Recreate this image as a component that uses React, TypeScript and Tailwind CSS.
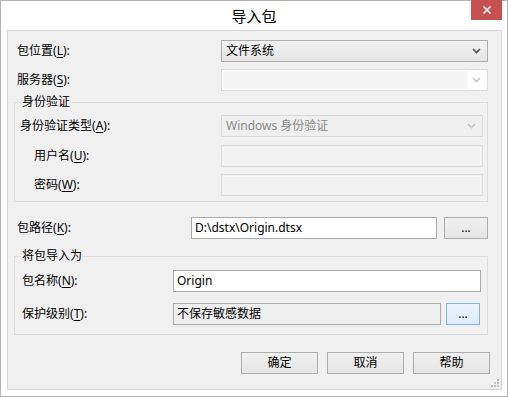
import React from "react";

const font = { fontFamily: '"Noto Sans", "Noto Sans CJK SC", sans-serif' };

function U({ c }: { c: string }) {
  return <span className="underline underline-offset-2">{c}</span>;
}

function Label({ text, k, className = "" }: { text: string; k: string; className?: string }) {
  return (
    <div className={"text-[12px] leading-[22px] text-black " + className}>
      {text}(<U c={k} />):
    </div>
  );
}

function Chevron({ color }: { color: string }) {
  return (
    <svg width="9" height="6" viewBox="0 0 9 6" className="shrink-0">
      <path d="M1 1 L4.5 4.5 L8 1" fill="none" stroke={color} strokeWidth="1.6" />
    </svg>
  );
}

function Btn({ children, className = "" }: { children: React.ReactNode; className?: string }) {
  return (
    <div
      className={
        "h-[22px] flex items-center justify-center text-[12px] text-black border border-[#acacac] bg-gradient-to-b from-[#f0f0f0] to-[#e5e5e5] " +
        className
      }
    >
      {children}
    </div>
  );
}

export default function App() {
  return (
    <div className="w-[508px] h-[397px] bg-white border border-[#b4b4b4] relative flex flex-col" style={font}>
      {/* title bar */}
      <div className="h-[29px] flex items-center justify-center text-[15px] text-black pt-[1px]">导入包</div>
      <div className="absolute top-[-1px] right-[5px] w-[31px] h-[20px] bg-[#c75050] flex items-center justify-center">
        <svg width="10" height="10" viewBox="0 0 10 10">
          <path d="M1.5 1.5 L8.5 8.5 M8.5 1.5 L1.5 8.5" stroke="white" strokeWidth="1.6" />
        </svg>
      </div>

      {/* client */}
      <div className="ml-[6px] w-[495px] h-[360px] border border-[#d6d6d6] bg-[#f0f0f0] flex flex-col relative">
        {/* 包位置 */}
        <div className="flex mt-[9px] pl-[9px]">
          <Label text="包位置" k="L" className="w-[204px]" />
          <div className="w-[267px] h-[22px] border border-[#acacac] bg-gradient-to-b from-[#f2f2f2] to-[#e5e5e5] flex items-center justify-between pl-[4px] pr-[6px]">
            <span className="text-[12px] text-black">文件系统</span>
            <Chevron color="#555555" />
          </div>
        </div>
        {/* 服务器 */}
        <div className="flex mt-[7px] pl-[9px]">
          <Label text="服务器" k="S" className="w-[204px]" />
          <div className="w-[267px] h-[22px] border border-[#dcdcdc] bg-white p-[1px] flex">
            <div className="flex-1 bg-[#f4f4f4]" />
            <div className="w-[19px] flex items-center justify-center">
              <Chevron color="#c8c8c8" />
            </div>
          </div>
        </div>

        {/* 身份验证 fieldset */}
        <div className="relative mt-[11px] ml-[6px] w-[474px] h-[100px] border border-[#dcdcdc] flex flex-col">
          <div className="absolute top-[-10px] left-[6px] px-[1px] bg-[#f0f0f0] text-[12px] leading-[18px] text-black">身份验证</div>
          <div className="flex mt-[12px] pl-[5px]">
            <Label text="身份验证类型" k="A" className="w-[201px]" />
            <div className="w-[262px] h-[22px] border border-[#d9d9d9] bg-[#efefef] flex items-center justify-between pl-[4px] pr-[6px]">
              <span className="text-[12px] text-[#8a8a8a]">Windows 身份验证</span>
              <Chevron color="#c4c4c4" />
            </div>
          </div>
          <div className="flex mt-[8px] pl-[19px]">
            <Label text="用户名" k="U" className="w-[187px]" />
            <div className="w-[262px] h-[22px] border border-[#dadada] bg-[#f0f0f0] p-[1px]">
              <div className="w-full h-full border border-[#f7f7f7]" />
            </div>
          </div>
          <div className="flex mt-[7px] pl-[19px]">
            <Label text="密码" k="W" className="w-[187px]" />
            <div className="w-[262px] h-[22px] border border-[#dadada] bg-[#f0f0f0] p-[1px]">
              <div className="w-full h-full border border-[#f7f7f7]" />
            </div>
          </div>
        </div>

        {/* 包路径 */}
        <div className="flex mt-[15px] pl-[9px] items-start">
          <Label text="包路径" k="K" className="w-[174px]" />
          <div className="w-[246px] h-[22px] border border-[#ababab] bg-white flex items-center pl-[3px] text-[12px] text-black">
            D:\dstx\Origin.dtsx
          </div>
          <Btn className="ml-[7px] w-[44px] h-[21px]">...</Btn>
        </div>

        {/* 将包导入为 fieldset */}
        <div className="relative mt-[17px] ml-[6px] w-[474px] h-[79px] border border-[#dcdcdc] flex flex-col">
          <div className="absolute top-[-10px] left-[6px] px-[1px] bg-[#f0f0f0] text-[12px] leading-[18px] text-black">将包导入为</div>
          <div className="flex mt-[13px] pl-[7px]">
            <Label text="包名称" k="N" className="w-[151px]" />
            <div className="w-[308px] h-[22px] border border-[#ababab] bg-white flex items-center pl-[3px] text-[12px] text-black">
              Origin
            </div>
          </div>
          <div className="flex mt-[11px] pl-[7px]">
            <Label text="保护级别" k="T" className="w-[151px]" />
            <div className="w-[268px] h-[22px] border border-[#ababab] bg-[#efefef] flex items-center pl-[3px] text-[12px] text-black">
              不保存敏感数据
            </div>
            <div className="ml-[5px] w-[34px] h-[22px] border border-[#7eb4ea] bg-gradient-to-b from-[#ecf4fc] to-[#dcecfc] flex items-center justify-center text-[12px] text-black">
              ...
            </div>
          </div>
        </div>

        {/* buttons */}
        <div className="flex justify-end gap-[9px] mt-[17px] pr-[11px]">
          <Btn className="w-[77px]">确定</Btn>
          <Btn className="w-[77px]">取消</Btn>
          <Btn className="w-[77px]">帮助</Btn>
        </div>

        {/* resize grip */}
        <svg className="absolute right-[1px] bottom-[1px]" width="10" height="10" viewBox="0 0 10 10">
          <g fill="#c2c2c2">
            <rect x="7" y="1" width="2" height="2" />
            <rect x="4" y="4" width="2" height="2" />
            <rect x="7" y="4" width="2" height="2" />
            <rect x="1" y="7" width="2" height="2" />
            <rect x="4" y="7" width="2" height="2" />
            <rect x="7" y="7" width="2" height="2" />
          </g>
        </svg>
      </div>
    </div>
  );
}
